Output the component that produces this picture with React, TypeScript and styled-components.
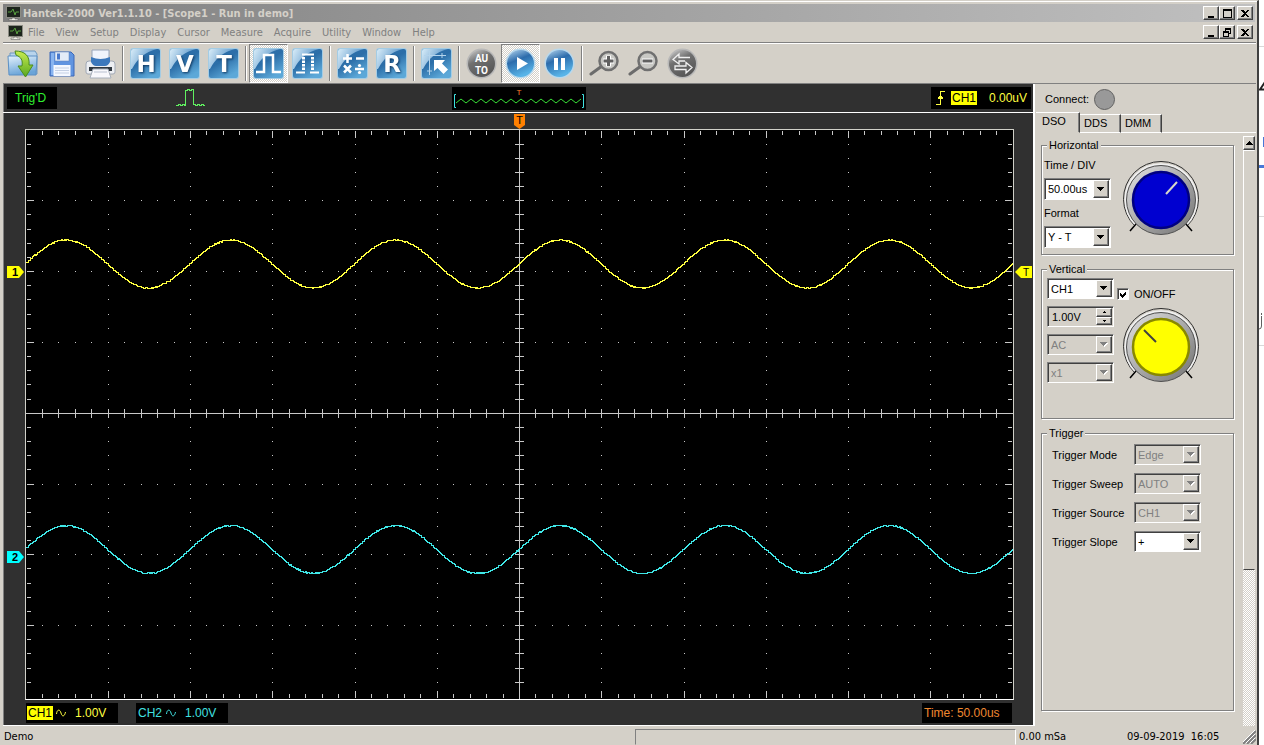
import React, { ReactNode, useState } from "react";
import styled, { createGlobalStyle, css } from "styled-components";

const face = "#d4d0c8";
const shadow = "#808080";
const dark = "#404040";
const tahoma = `"DejaVu Sans Condensed", "DejaVu Sans", sans-serif`;
const arial = `"Liberation Sans", Arial, sans-serif`;

const raised = css`
  border: 1px solid;
  border-color: #ffffff ${dark} ${dark} #ffffff;
  box-shadow: inset -1px -1px 0 ${shadow};
`;

const sunken = css`
  border: 1px solid;
  border-color: ${shadow} #ffffff #ffffff ${shadow};
  box-shadow: inset 1px 1px 0 ${dark};
`;

const dither = css`
  background: repeating-conic-gradient(#ffffff 0 25%, ${face} 0 50%) 0 0 / 2px 2px;
`;

const GlobalStyle = createGlobalStyle`
  *, *::before, *::after { box-sizing: border-box; }
  body { margin: 0; background: #ffffff; font: 11px/12px ${arial}; color: #000000; }
  button, select, input { font: inherit; color: inherit; margin: 0; padding: 0; border-radius: 0; }
  svg { display: block; flex: none; }
`;

/* ---------- window frame ---------- */

const Desktop = styled.div`
  display: flex;
  min-height: 100vh;
`;

const AppWindow = styled.div`
  flex: 1;
  min-width: 0;
  display: flex;
  flex-direction: column;
  background: ${face};
  padding: 2px 1px 0 3px;
  border-top: 1px solid ${face};
  border-right: 2px solid ${dark};
  box-shadow: inset 0 1px 0 #ffffff;
`;

const PageBehind = styled.div`
  width: 5px;
  overflow: hidden;
  display: flex;
  flex-direction: column;
`;

const PageSlice = styled.div<{ $height: number; $rule?: string; $thick?: number }>`
  height: ${(p) => p.$height}px;
  display: flex;
  align-items: flex-end;
  border-bottom: ${(p) => p.$thick ?? 1}px solid ${(p) => p.$rule ?? "transparent"};
`;

const TitleBar = styled.header`
  display: flex;
  align-items: center;
  height: 19px;
  margin-right: 1px;
  padding: 0 2px 0 3px;
  gap: 2px;
  background: linear-gradient(90deg, #808080, #c0c0c0);
  color: ${face};
  border-top: 1px solid ${face};
`;

const Title = styled.h1`
  flex: 1;
  margin: 0;
  padding-top: 1px;
  font: bold 11px/14px ${tahoma};
  white-space: nowrap;
`;

const MenuBar = styled.nav`
  display: flex;
  align-items: center;
  height: 20px;
  margin-right: 1px;
  padding: 0 2px 0 5px;
  gap: 5px;
`;

const MenuList = styled.div`
  flex: 1;
  display: flex;
  gap: 11px;
  padding-top: 1px;
`;

const MenuItem = styled.button`
  border: 0;
  background: none;
  color: ${shadow};
  font: 11px/14px ${tahoma};
`;

const Captions = styled.div`
  display: flex;
`;

const CaptionButton = styled.button<{ $apart?: boolean }>`
  ${raised}
  width: 16px;
  height: 14px;
  display: grid;
  place-items: center;
  background: ${face};
  margin-left: ${(p) => (p.$apart ? 2 : 0)}px;
`;

/* ---------- toolbar ---------- */

const Toolbar = styled.div`
  display: flex;
  height: 42px;
  border-top: 1px solid ${shadow};
  border-bottom: 1px solid ${shadow};
  box-shadow: inset 0 1px 0 #ffffff;
  padding-top: 1px;
`;

const ToolButton = styled.button<{ $pressed?: boolean }>`
  width: 39px;
  height: 39px;
  display: grid;
  place-items: center;
  border: 1px solid transparent;
  background: none;
  ${(p) =>
    p.$pressed &&
    css`
      ${dither}
      border-color: ${shadow} #ffffff #ffffff ${shadow};
    `}
`;

const ToolSeparator = styled.div`
  width: 2px;
  margin: 2px;
  background: ${shadow};
  border-right: 1px solid #ffffff;
`;

/* ---------- scope ---------- */

const Main = styled.main`
  flex: 1;
  display: flex;
`;

const ScopePane = styled.section`
  flex: 1;
  min-width: 0;
  display: flex;
  flex-direction: column;
  border-right: 2px solid #ffffff;
  border-bottom: 1px solid #ffffff;
`;

const TriggerStrip = styled.div`
  display: grid;
  grid-template-columns: 1fr auto 1fr;
  height: 28px;
  padding: 3px 2px 0 3px;
  background: #303030;
  border-left: 1px solid ${shadow};
  margin-bottom: 1px;
  box-shadow: 0 1px 0 #ffffff;
`;

const StripSide = styled.div<{ $end?: boolean }>`
  display: flex;
  align-items: flex-start;
  justify-content: ${(p) => (p.$end ? "flex-end" : "flex-start")};
  gap: 119px;
`;

const Readout = styled.div<{ $color: string; $width: number }>`
  display: flex;
  align-items: center;
  height: 22px;
  width: ${(p) => p.$width}px;
  background: #000000;
  color: ${(p) => p.$color};
  font: 12px/14px ${arial};
  white-space: pre;
`;

const Status = styled.span`
  padding-left: 8px;
`;

const ChannelTag = styled.span<{ $on?: boolean }>`
  padding: 0 1px;
  margin-left: 1px;
  ${(p) =>
    p.$on &&
    css`
      background: #ffff00;
      color: #000000;
    `}
`;

const TriggerLevel = styled.span`
  flex: 1;
  text-align: right;
  padding-right: 4px;
`;

const Coupling = styled.span`
  padding: 0 9px 0 3px;
`;

const ScopeArea = styled.div`
  flex: 1;
  display: flex;
  flex-direction: column;
  background: #303030;
  border-left: 1px solid ${shadow};
`;

const MarkerRow = styled.div`
  height: 16px;
  padding: 1px 19px 0 21px;
  display: flex;
  justify-content: center;
`;

const PlotRow = styled.div`
  flex: 1;
  display: flex;
`;

const Gutter = styled.div<{ $width: number }>`
  position: relative;
  width: ${(p) => p.$width}px;
`;

const GutterPin = styled.div<{ $level: number; $left: number }>`
  position: absolute;
  top: ${(p) => p.$level}%;
  left: ${(p) => p.$left}px;
  transform: translateY(-50%);
`;

const PlotFrame = styled.div`
  flex: 1;
  min-width: 0;
  display: flex;
  background: #000000;
  border: 1px solid #d0d0c8;
  border-bottom-color: #ffffff;
`;

const PlotSvg = styled.svg`
  width: 100%;
  flex: 1;
  min-height: 560px;
`;

const ScopeFooter = styled.div`
  display: flex;
  height: 25px;
  padding: 3px 21px 0 22px;
  gap: 18px;
  ${Readout} {
    height: 20px;
  }
`;

const Spring = styled.div`
  flex: 1;
`;

const TimeText = styled.span`
  padding-left: 2px;
`;

/* ---------- control panel ---------- */

const ControlPanel = styled.aside`
  width: 221px;
  display: flex;
  flex-direction: column;
`;

const ConnectRow = styled.div`
  display: flex;
  align-items: center;
  height: 28px;
  padding: 2px 0 0 10px;
  gap: 5px;
`;

const Lamp = styled.span`
  width: 21px;
  height: 21px;
  border-radius: 50%;
  background: #999999;
  border: 1px solid #606060;
`;

const Tabs = styled.div`
  display: flex;
  align-items: flex-end;
  height: 21px;
  padding-left: 1px;
`;

const Tab = styled.button<{ $active?: boolean }>`
  height: 19px;
  width: 41px;
  padding: 0 0 1px 4px;
  text-align: left;
  background: none;
  border: 0 solid;
  border-width: 1px 1px 1px 0;
  border-color: #ffffff ${dark} #ffffff #ffffff;
  box-shadow: inset -1px 0 0 ${shadow};
  ${(p) =>
    p.$active &&
    css`
      width: 44px;
      height: 21px;
      padding-bottom: 3px;
      padding-left: 6px;
      border-bottom-color: ${face};
    `}
`;

const TabRest = styled.div`
  flex: 1;
  border-bottom: 1px solid #ffffff;
`;

const PanelBody = styled.div`
  flex: 1;
  display: flex;
`;

const Groups = styled.div`
  flex: 1;
  display: flex;
  flex-direction: column;
  gap: 8px;
  padding: 6px 9px 15px 6px;
`;

const Group = styled.fieldset<{ $height?: number }>`
  min-width: 0;
  margin: 0;
  padding: 0;
  border: 1px solid ${shadow};
  box-shadow: 1px 1px 0 #ffffff, inset 1px 1px 0 #ffffff;
  ${(p) => (p.$height ? `height: ${p.$height}px;` : "flex: 1;")}
`;

const Legend = styled.legend`
  margin-left: 5px;
  padding: 0 2px;
  background: ${face};
`;

const GroupRow = styled.div<{ $gap: number }>`
  display: flex;
  gap: ${(p) => p.$gap}px;
`;

const Column = styled.div<{ $top: number; $left?: number }>`
  display: flex;
  flex-direction: column;
  gap: 7px;
  padding: ${(p) => p.$top}px 0 0 ${(p) => p.$left ?? 0}px;
`;

const FieldLabel = styled.label`
  height: 12px;
  white-space: nowrap;
`;

const Combo = styled.span<{ $disabled?: boolean; $height?: number }>`
  ${sunken}
  display: flex;
  width: 67px;
  height: ${(p) => p.$height ?? 21}px;
  padding: 1px;
  background: ${(p) => (p.$disabled ? face : "#ffffff")};
  position: relative;
`;

const ComboSelect = styled.select`
  appearance: none;
  flex: 1;
  min-width: 0;
  padding-left: 2px;
  border: 0;
  background: transparent;
  &:disabled {
    color: ${shadow};
    opacity: 1;
  }
`;

const ComboArrow = styled.span`
  ${raised}
  position: absolute;
  top: 1px;
  right: 1px;
  bottom: 1px;
  width: 16px;
  display: grid;
  place-items: center;
  background: ${face};
  pointer-events: none;
`;

const SpinBox = styled.span`
  ${sunken}
  display: flex;
  width: 67px;
  height: 21px;
  padding: 1px;
`;

const SpinInput = styled.input`
  flex: 1;
  min-width: 0;
  border: 0;
  padding-left: 3px;
  background: transparent;
`;

const SpinButtons = styled.span`
  display: flex;
  flex-direction: column;
  width: 16px;
`;

const SpinButton = styled.button`
  ${raised}
  flex: 1;
  display: grid;
  place-items: center;
  background: ${face};
`;

const CheckRow = styled.label`
  display: flex;
  align-items: center;
  gap: 5px;
  height: 12px;
`;

const CheckBox = styled.input`
  ${sunken}
  appearance: none;
  width: 12px;
  height: 12px;
  background: #ffffff;
`;

const CheckHolder = styled.span`
  position: relative;
  display: flex;
  svg {
    position: absolute;
    inset: 2px;
    pointer-events: none;
  }
`;

const KnobHolder = styled.div`
  padding-left: 4px;
`;

const TriggerGrid = styled.div`
  display: grid;
  grid-template-columns: 82px auto;
  align-items: center;
  justify-content: start;
  row-gap: 8px;
  padding: 5px 0 0 10px;
`;

const ScrollBar = styled.div`
  width: 13px;
  display: flex;
  flex-direction: column;
  padding: 3px 1px 0 0;
`;

const ScrollUp = styled.button`
  ${raised}
  height: 14px;
  display: grid;
  place-items: center;
  background: ${face};
`;

const ScrollThumb = styled.div`
  ${raised}
  flex: 420;
  border-right-color: ${face};
  box-shadow: none;
`;

const ScrollTrack = styled.div`
  ${dither}
  flex: 157;
`;

/* ---------- status bar ---------- */

const StatusBar = styled.footer`
  display: flex;
  align-items: center;
  height: 19px;
  padding: 3px 0 0 1px;
  font: 11px/14px ${tahoma};
  white-space: pre;
`;

const Progress = styled.div`
  width: 381px;
  height: 16px;
  border: 1px solid;
  border-color: ${shadow} #ffffff ${face} ${shadow};
`;

const SampleText = styled.span`
  width: 111px;
  padding-left: 3px;
`;

const ClockText = styled.span`
  width: 116px;
`;

/* ---------- drawings ---------- */

const MonitorIcon = () => (
  <svg width="15" height="15" viewBox="0 0 15 15">
    <rect x="0" y="0" width="15" height="12" fill="#8c8c84" />
    <rect x="1" y="1" width="13" height="10" fill="#1c241c" />
    <path d="M2 6h3l2-3 2 6 1-3h3" stroke="#58a040" fill="none" />
    <path d="M6 12h3v1h3v1.500H3V13h3z" fill="#f0f0e8" stroke="#505050" strokeWidth="0.500" />
  </svg>
);

const captionGlyphs: Record<string, ReactNode> = {
  Minimize: <path d="M1 7h6v2H1z" />,
  Maximize: <path d="M0 0h9v9H0zM1 2v6h7V2z" fillRule="evenodd" />,
  Restore: <path d="M2 0h6v6H6v3H0V3h2zM3 2v1h3v2h1V2zM1 5v3h4V5z" fillRule="evenodd" />,
  Close: <path d="M0 1h2l2 2 2-2h2L5 4.500l3 3.500H6L4 6 2 8H0l3-3.500z" />,
};

const CaptionSet = ({ middle }: { middle: string }) => (
  <Captions>
    {["Minimize", middle, "Close"].map((name) => (
      <CaptionButton key={name} aria-label={name} $apart={name === "Close"}>
        <svg width="9" height="9" viewBox="0 0 9 9" shapeRendering="crispEdges">
          {captionGlyphs[name]}
        </svg>
      </CaptionButton>
    ))}
  </Captions>
);

const HiddenDefs = styled.svg`
  position: absolute;
`;

const IconDefs = () => (
  <HiddenDefs width="0" height="0" aria-hidden="true">
    <defs>
      <linearGradient id="tile" x1="0" y1="0" x2="0.600" y2="1">
        <stop offset="0" stopColor="#2e70ac" />
        <stop offset="0.500" stopColor="#2c6ea8" />
        <stop offset="1" stopColor="#5ca8d8" />
      </linearGradient>
      <linearGradient id="gloss" x1="0" y1="0" x2="1" y2="0.400">
        <stop offset="0" stopColor="#d8ecf8" />
        <stop offset="1" stopColor="#4c8cc4" />
      </linearGradient>
      <linearGradient id="greyDisc" x1="0" y1="0" x2="0.500" y2="1">
        <stop offset="0" stopColor="#d0d0d0" />
        <stop offset="0.450" stopColor="#707070" />
        <stop offset="1" stopColor="#585858" />
      </linearGradient>
      <linearGradient id="blueDisc" x1="0" y1="0" x2="0.400" y2="1">
        <stop offset="0" stopColor="#b8d8f0" />
        <stop offset="0.450" stopColor="#2c6cac" />
        <stop offset="1" stopColor="#58b4e8" />
      </linearGradient>
      <linearGradient id="folder" x1="0" y1="0" x2="0.300" y2="1">
        <stop offset="0" stopColor="#e4f2fc" />
        <stop offset="1" stopColor="#6aa4d8" />
      </linearGradient>
      <linearGradient id="arrowGreen" x1="0" y1="0" x2="0" y2="1">
        <stop offset="0" stopColor="#c8ec50" />
        <stop offset="1" stopColor="#58a820" />
      </linearGradient>
      <linearGradient id="knobRing" x1="0" y1="0" x2="1" y2="1">
        <stop offset="0" stopColor="#e4e4e4" />
        <stop offset="1" stopColor="#707070" />
      </linearGradient>
    </defs>
  </HiddenDefs>
);

const Tile = ({ children }: { children: ReactNode }) => (
  <svg width="31" height="31" viewBox="0 0 31 31">
    <rect width="31" height="31" rx="3" fill="#a4cce4" />
    <rect x="1" y="1" width="29" height="29" rx="2" fill="url(#tile)" />
    <path d="M1 3a2 2 0 0 1 2-2h24Q10 5 2 21H1z" fill="url(#gloss)" />
    {children}
  </svg>
);

const IconText = styled.text`
  font-family: "DejaVu Sans", sans-serif;
  font-weight: bold;
  text-anchor: middle;
  fill: #ffffff;
`;

const TileLetter = styled(IconText)`
  font-size: 23px;
  filter: drop-shadow(1px 1px 1px #103860);
`;

const LetterTile = ({ letter }: { letter: string }) => (
  <Tile>
    <TileLetter x="16" y="23.500">
      {letter}
    </TileLetter>
  </Tile>
);

const AutoText = styled(IconText)`
  font-family: Roboto, ${arial};
  font-size: 10px;
`;

const Disc = ({ fill, rim, children }: { fill: string; rim: string; children: ReactNode }) => (
  <svg width="31" height="31" viewBox="0 0 31 31">
    <circle cx="15.500" cy="15.500" r="15" fill={rim} />
    <circle cx="15.500" cy="15.500" r="13.500" fill={fill} />
    {children}
  </svg>
);

const Magnifier = ({ plus }: { plus?: boolean }) => (
  <svg width="31" height="29" viewBox="0 0 31 29">
    <path d="M2 25 13 17" stroke="#6c6c6c" strokeWidth="3" strokeLinecap="round" />
    <circle cx="19.500" cy="12" r="9" fill="#c8c8c4" stroke="#707070" strokeWidth="2.500" />
    <path d={plus ? "M14 12h11M19.500 6.500v11" : "M14 12h11"} stroke="#ffffff" strokeWidth="5" />
    <path d={plus ? "M14.500 12h10M19.500 7v10" : "M14.500 12h10"} stroke="#606060" strokeWidth="3" />
  </svg>
);

const OpenIcon = () => (
  <svg width="32" height="28" viewBox="0 0 32 28">
    <path d="M3 3h9l2-2h14l2 3v20H3z" fill="#b8d4ec" stroke="#6c98c0" />
    <path d="M1 6h29l-1 19H2z" fill="url(#folder)" stroke="#5c90c4" />
    <path
      d="M8 1c10 0 15 5 14 14h4l-7.500 12L11 16h4c1-6-1-9-6-11z"
      fill="url(#arrowGreen)"
      stroke="#4c8c1c"
    />
  </svg>
);

const SaveIcon = () => (
  <svg width="26" height="28" viewBox="0 0 26 28">
    <path d="M1 2h21l3 3v21H1z" fill="#6094e0" stroke="#3c68b8" />
    <path d="M2 3h3v22H2z" fill="#88b4f0" />
    <rect x="6" y="2" width="14" height="9" fill="#e4ecf8" stroke="#5c80b8" strokeWidth="0.500" />
    <rect x="8" y="3.500" width="3" height="6" fill="#4878cc" />
    <rect x="4.500" y="15" width="17" height="11" fill="#f4f8ff" />
    <path d="M6 18h14M6 20.500h14M6 23h14" stroke="#c4d0e4" />
  </svg>
);

const PrintIcon = () => (
  <svg width="31" height="30" viewBox="0 0 31 30">
    <path
      d="M4 12h23q3 0 3 3v8q0 2-2 2H3q-2 0-2-2v-8q0-3 3-3z"
      fill="#eceef2"
      stroke="#a0a8b4"
    />
    <path d="M4 18h23v4H4z" fill="#303840" />
    <path d="M7 1h17v12H7z" fill="#f0f4fc" stroke="#98a4b8" />
    <path d="M6 8q9.500 4 19 0v5q-2 4-5 4h-9q-3 0-5-4z" fill="#3c78bc" />
    <path d="M8 20h15l3 9H5z" fill="#f8f8fc" stroke="#a8b0bc" />
    <path d="M9 23h13" stroke="#b8c0d0" />
  </svg>
);

type Tool = { name: string; icon: ReactNode; pressed?: boolean };

const toolGroups: Tool[][] = [
  [
    { name: "Open", icon: <OpenIcon /> },
    { name: "Save", icon: <SaveIcon /> },
    { name: "Print", icon: <PrintIcon /> },
  ],
  [
    { name: "Horizontal", icon: <LetterTile letter="H" /> },
    { name: "Vertical", icon: <LetterTile letter="V" /> },
    { name: "Trigger", icon: <LetterTile letter="T" /> },
  ],
  [
    {
      name: "Line",
      pressed: true,
      icon: (
        <Tile>
          <path d="M3 24h8V7h9v17h8" fill="none" stroke="#ffffff" strokeWidth="2.500" />
        </Tile>
      ),
    },
    {
      name: "Dots",
      icon: (
        <Tile>
          <path
            d="M4 24.500h9M18 24.500h9M10 6.500h12"
            fill="none"
            stroke="#ffffff"
            strokeWidth="2"
          />
          <path d="M11.500 9v14M20.500 9v14" stroke="#ffffff" strokeWidth="3" strokeDasharray="2.500 1" />
        </Tile>
      ),
    },
  ],
  [
    {
      name: "Math",
      icon: (
        <Tile>
          <path
            d="M6 10.500h9M10.500 6v9M19 10.500h8M7 17.500l7 7M14 17.500l-7 7M18 21h9"
            stroke="#ffffff"
            strokeWidth="2.500"
          />
          <circle cx="22.500" cy="17.500" r="1.600" fill="#ffffff" />
          <circle cx="22.500" cy="24.500" r="1.600" fill="#ffffff" />
        </Tile>
      ),
    },
    { name: "Reference", icon: <LetterTile letter="R" /> },
  ],
  [
    {
      name: "Cursor",
      icon: (
        <Tile>
          <path d="M8.500 3v24M3 7.500h22M21 5v5M6 23h5" stroke="#b4d4ec" />
          <path d="M13 12h11l-3 3.500 6 6-4.500 4.500-6-6L13 23z" fill="#ffffff" />
        </Tile>
      ),
    },
  ],
  [
    {
      name: "Auto set",
      icon: (
        <Disc fill="url(#greyDisc)" rim="#b8b8b8">
          <AutoText x="15.500" y="14">
            AU
          </AutoText>
          <AutoText x="15.500" y="26">
            TO
          </AutoText>
        </Disc>
      ),
    },
    {
      name: "Run",
      pressed: true,
      icon: (
        <Disc fill="url(#blueDisc)" rim="#b8d8ec">
          <path d="M12 9v13l11-6.500z" fill="#ffffff" />
        </Disc>
      ),
    },
    {
      name: "Pause",
      icon: (
        <Disc fill="url(#blueDisc)" rim="#b8d8ec">
          <path d="M12 10v12M19 10v12" stroke="#ffffff" strokeWidth="4" />
        </Disc>
      ),
    },
  ],
  [
    { name: "Zoom in", icon: <Magnifier plus /> },
    { name: "Zoom out", icon: <Magnifier /> },
    {
      name: "Swap",
      icon: (
        <Disc fill="url(#greyDisc)" rim="#b8b8b8">
          <path
            d="M23 9.500H12V6l-6 5.500 6 4.500v-3h6M8 18h11v-3.500l6 5-6 5.500v-3.500H8z"
            fill="none"
            stroke="#f0f0f0"
            strokeWidth="1.300"
          />
        </Disc>
      ),
    },
  ],
];

const DownArrow = ({ faded }: { faded?: boolean }) => (
  <svg width="8" height="5" viewBox="0 0 8 5" shapeRendering="crispEdges">
    {faded && <path d="M1 1h7v1H7v1H6v1H5v1H4V4H3V3H2V2H1z" fill="#ffffff" />}
    <path d="M0 0h7v1H6v1H5v1H4v1H3V3H2V2H1V1H0z" fill={faded ? shadow : "#000000"} />
  </svg>
);

const WIDTH = 987;
const HEIGHT = 569;
const DIV_X = WIDTH / 12;
const DIV_Y = 70.8;
const CENTER_X = 493;
const CENTER_Y = 283;

const xs = Array.from({ length: 59 }, (_, i) => ({
  at: Math.floor(((i + 1) * DIV_X) / 5),
  major: (i + 1) % 5 === 0,
}));
const ys = Array.from({ length: 39 }, (_, i) => ({
  at: Math.floor(((i + 1) * DIV_Y) / 5),
  major: (i + 1) % 5 === 0,
}));

const box = (x: number, y: number, w: number, h: number) => `M${x} ${y}h${w}v${h}h${-w}z`;

const graticule = [
  ...xs.map(({ at, major }) => {
    const size = major ? 7 : 4;
    return (
      box(at, 1, 1, size) + box(at, HEIGHT - size - 1, 1, size) + box(at, CENTER_Y - 4, 1, 9)
    );
  }),
  ...ys.map(({ at, major }) => {
    const size = major ? 7 : 4;
    return box(1, at, size, 1) + box(WIDTH - size - 1, at, size, 1) + box(CENTER_X - 4, at, 9, 1);
  }),
  ...xs.filter((x) => x.major).flatMap((x) => ys.map((y) => box(x.at, y.at, 1, 1))),
  ...ys.filter((y) => y.major).flatMap((y) => xs.map((x) => box(x.at, y.at, 1, 1))),
].join("");

/* Quantised sine samples with a little deterministic sampling noise. */
const trace = (mean: number, seed: number) => {
  const points: string[] = [];
  let noise = seed;
  for (let x = 0; x < WIDTH; x += 1) {
    noise = (noise * 1664525 + 1013904223) % 4294967296;
    const jitter = (noise / 4294967296 - 0.5) * 1.1;
    const y = Math.round(mean - 23.9 * Math.cos((2 * Math.PI * (x - 39.5)) / 164.6) + jitter);
    points.push(`${x} ${y + 0.5}H${x + 1}`);
  }
  return `M${points.join("L")}`;
};

const Plot = () => (
  <PlotSvg viewBox={`0 0 ${WIDTH} ${HEIGHT}`} preserveAspectRatio="none" aria-label="Waveforms">
    <g shapeRendering="crispEdges">
      <path
        d={`M${CENTER_X + 0.5} 0V${HEIGHT}M0 ${CENTER_Y + 0.5}H${WIDTH}`}
        stroke="#c8c8c8"
        vectorEffect="non-scaling-stroke"
      />
      <path d={graticule} fill="#c8c8c8" />
      <path d={trace(133.5, 7)} fill="none" stroke="#ffff40" vectorEffect="non-scaling-stroke" />
      <path d={trace(419, 91)} fill="none" stroke="#40e8e8" vectorEffect="non-scaling-stroke" />
    </g>
  </PlotSvg>
);

const ChannelPin = ({ label, color }: { label: string; color: string }) => (
  <svg width="18" height="12" viewBox="0 0 18 12">
    <path d="M0 0h12l5 6-5 6H0z" fill={color} />
    <text x="8" y="10" fontSize="11" fontWeight="bold" textAnchor="middle" fontFamily={arial}>
      {label}
    </text>
  </svg>
);

const TriggerPin = () => (
  <svg width="18" height="12" viewBox="0 0 18 12">
    <path d="M17 0H6L0 6l6 6h11z" fill="#ffff00" />
    <text x="11" y="10" fontSize="10" textAnchor="middle" fontFamily={arial}>
      T
    </text>
  </svg>
);

const TimePin = () => (
  <svg width="11" height="15" viewBox="0 0 11 15">
    <path d="M0 0h11v11l-5.500 4L0 11z" fill="#ff8000" />
    <text x="5.500" y="10" fontSize="11" textAnchor="middle" fontFamily={arial}>
      T
    </text>
  </svg>
);

const PulseMark = () => (
  <svg width="30" height="20" viewBox="0 0 30 20" shapeRendering="crispEdges">
    <path
      d="M0 18.500h2v-1h2v1h2v-1h2v1h1V3.500h2v-1h2v1h2v-1h2v15h2v1h2v-1h2v1h2v-1h2v1h2"
      fill="none"
      stroke="#60f060"
    />
  </svg>
);

const miniWave = Array.from({ length: 26 }, (_, i) => `${4 + i * 5} ${i % 2 ? 12 : 16}`).join("L");

const Overview = () => (
  <svg width="134" height="23" viewBox="0 0 134 23">
    <rect width="134" height="23" fill="#000000" />
    <path d={`M${miniWave}`} fill="none" stroke="#38e038" />
    <path d="M4 7.500H2.500v13H4M130 7.500h1.500v13H130" fill="none" stroke="#40e0e0" />
    <text x="67" y="8" fontSize="8" fill="#ff8030" textAnchor="middle" fontFamily={arial}>
      T
    </text>
  </svg>
);

const RisingEdge = () => (
  <svg width="19" height="16" viewBox="0 0 19 16" shapeRendering="crispEdges">
    <path d="M5 14.500h4.500V1.500H14" fill="none" stroke="#ffff40" />
    <path d="M9 5h1v1h1v1h1v2H7V7h1V6h1z" fill="#ffff40" />
  </svg>
);

const AcMark = () => (
  <svg width="10" height="8" viewBox="0 0 10 8">
    <path d="M0.500 5C1 0 4 0 5 4s3.500 4 4.500-1" fill="none" stroke="currentColor" />
  </svg>
);

const Knob = ({ color, rim, pointer, ink }: { color: string; rim: string; pointer: string; ink: string }) => (
  <svg width="80" height="80" viewBox="-40 -40 80 80" role="img" aria-label="Knob">
    <path d="M-26 26A37.500 37.500 0 1 1 26 26" fill="none" stroke="#303030" />
    <path d="M-25 25A35.500 35.500 0 1 1 25 25" fill="none" stroke="#f0f0f0" strokeWidth="2" />
    <circle r="34.500" fill="url(#knobRing)" stroke="#505050" />
    <circle r="28" fill={color} stroke={rim} strokeWidth="2.500" />
    <path d={pointer} stroke={ink} strokeWidth="2" />
    <path d="M-25 24l-6 7M25 24l6 7" stroke="#000000" strokeWidth="1.500" />
  </svg>
);

const Dropdown = ({
  id,
  label,
  options,
  disabled,
  height,
}: {
  id: string;
  label?: string;
  options: string[];
  disabled?: boolean;
  height?: number;
}) => (
  <Combo $disabled={disabled} $height={height}>
    <ComboSelect id={id} aria-label={label} disabled={disabled}>
      {options.map((o) => (
        <option key={o}>{o}</option>
      ))}
    </ComboSelect>
    <ComboArrow>
      <DownArrow faded={disabled} />
    </ComboArrow>
  </Combo>
);

const triggerFields = [
  { id: "mode", label: "Trigger Mode", options: ["Edge"], disabled: true },
  { id: "sweep", label: "Trigger Sweep", options: ["AUTO"], disabled: true },
  { id: "source", label: "Trigger Source", options: ["CH1"], disabled: true },
  { id: "slope", label: "Trigger Slope", options: ["+", "-"], disabled: false },
];

const menus = ["File", "View", "Setup", "Display", "Cursor", "Measure", "Acquire", "Utility", "Window", "Help"];

export default function App() {
  const [channelOn, setChannelOn] = useState(true);
  const [tab, setTab] = useState("DSO");

  return (
    <Desktop>
      <GlobalStyle />
      <IconDefs />
      <AppWindow>
        <TitleBar>
          <MonitorIcon />
          <Title>Hantek-2000 Ver1.1.10 - [Scope1 - Run in demo]</Title>
          <CaptionSet middle="Maximize" />
        </TitleBar>
        <MenuBar>
          <MonitorIcon />
          <MenuList>
            {menus.map((m) => (
              <MenuItem key={m}>{m}</MenuItem>
            ))}
          </MenuList>
          <CaptionSet middle="Restore" />
        </MenuBar>
        <Toolbar role="toolbar">
          {toolGroups.map((group, i) => (
            <React.Fragment key={group[0].name}>
              {i > 0 && <ToolSeparator />}
              {group.map((t) => (
                <ToolButton key={t.name} aria-label={t.name} $pressed={t.pressed}>
                  {t.icon}
                </ToolButton>
              ))}
            </React.Fragment>
          ))}
        </Toolbar>

        <Main>
          <ScopePane>
            <TriggerStrip>
              <StripSide>
                <Readout $color="#30f030" $width={50}>
                  <Status>Trig'D</Status>
                </Readout>
                <PulseMark />
              </StripSide>
              <Overview />
              <StripSide $end>
                <Readout $color="#ffff40" $width={100}>
                  <RisingEdge />
                  <ChannelTag $on>CH1</ChannelTag>
                  <TriggerLevel>0.00uV</TriggerLevel>
                </Readout>
              </StripSide>
            </TriggerStrip>
            <ScopeArea>
              <MarkerRow>
                <TimePin />
              </MarkerRow>
              <PlotRow>
                <Gutter $width={21}>
                  <GutterPin $level={25} $left={3}>
                    <ChannelPin label="1" color="#ffff00" />
                  </GutterPin>
                  <GutterPin $level={75} $left={3}>
                    <ChannelPin label="2" color="#00ffff" />
                  </GutterPin>
                </Gutter>
                <PlotFrame>
                  <Plot />
                </PlotFrame>
                <Gutter $width={19}>
                  <GutterPin $level={25} $left={1}>
                    <TriggerPin />
                  </GutterPin>
                </Gutter>
              </PlotRow>
              <ScopeFooter>
                <Readout $color="#ffff40" $width={92}>
                  <ChannelTag $on>CH1</ChannelTag>
                  <Coupling>
                    <AcMark />
                  </Coupling>
                  1.00V
                </Readout>
                <Readout $color="#40e0e0" $width={92}>
                  <ChannelTag>CH2</ChannelTag>
                  <Coupling>
                    <AcMark />
                  </Coupling>
                  1.00V
                </Readout>
                <Spring />
                <Readout $color="#f08830" $width={90}>
                  <TimeText>Time: 50.00us</TimeText>
                </Readout>
              </ScopeFooter>
            </ScopeArea>
          </ScopePane>

          <ControlPanel>
            <ConnectRow>
              Connect:
              <Lamp />
            </ConnectRow>
            <Tabs role="tablist">
              {["DSO", "DDS", "DMM"].map((name) => (
                <Tab
                  key={name}
                  role="tab"
                  aria-selected={tab === name}
                  $active={tab === name}
                  onClick={() => setTab(name)}
                >
                  {name}
                </Tab>
              ))}
              <TabRest />
            </Tabs>
            <PanelBody>
              <Groups>
                <Group $height={116}>
                  <Legend>Horizontal</Legend>
                  <GroupRow $gap={10}>
                    <Column $top={8} $left={2}>
                      <FieldLabel htmlFor="timeDiv">Time / DIV</FieldLabel>
                      <Dropdown id="timeDiv" options={["50.00us"]} height={22} />
                      <FieldLabel htmlFor="format">Format</FieldLabel>
                      <Dropdown id="format" options={["Y - T", "X - Y"]} height={22} />
                    </Column>
                    <Column $top={9}>
                      <Knob color="#0000d0" rim="#000080" pointer="M5-6 16-18" ink="#d8d8c8" />
                    </Column>
                  </GroupRow>
                </Group>
                <Group $height={156}>
                  <Legend>Vertical</Legend>
                  <GroupRow $gap={3}>
                    <Column $top={3} $left={5}>
                      <Dropdown id="channel" label="Channel" options={["CH1", "CH2"]} />
                      <SpinBox>
                        <SpinInput aria-label="Volts per division" defaultValue="1.00V" />
                        <SpinButtons>
                          <SpinButton aria-label="Increase">
                            <svg width="3" height="2" viewBox="0 0 3 2" shapeRendering="crispEdges">
                              <path d="M1 0h1v1h1v1H0V1h1z" />
                            </svg>
                          </SpinButton>
                          <SpinButton aria-label="Decrease">
                            <svg width="3" height="2" viewBox="0 0 3 2" shapeRendering="crispEdges">
                              <path d="M0 0h3v1H2v1H1V1H0z" />
                            </svg>
                          </SpinButton>
                        </SpinButtons>
                      </SpinBox>
                      <Dropdown id="coupling" label="Coupling" options={["AC"]} disabled />
                      <Dropdown id="probe" label="Probe" options={["x1"]} disabled />
                    </Column>
                    <Column $top={13}>
                      <CheckRow>
                        <CheckHolder>
                          <CheckBox
                            type="checkbox"
                            checked={channelOn}
                            onChange={(e) => setChannelOn(e.target.checked)}
                          />
                          {channelOn && (
                            <svg width="8" height="8" viewBox="0 0 8 8" shapeRendering="crispEdges">
                              <path d="M1 3l2 2 4-4v3L3 8 1 6z" />
                            </svg>
                          )}
                        </CheckHolder>
                        ON/OFF
                      </CheckRow>
                      <KnobHolder>
                        <Knob color="#ffff00" rim="#888800" pointer="M-17-17-5-5" ink="#404040" />
                      </KnobHolder>
                    </Column>
                  </GroupRow>
                </Group>
                <Group>
                  <Legend>Trigger</Legend>
                  <TriggerGrid>
                    {triggerFields.map((f) => (
                      <React.Fragment key={f.id}>
                        <FieldLabel htmlFor={f.id}>{f.label}</FieldLabel>
                        <Dropdown id={f.id} options={f.options} disabled={f.disabled} />
                      </React.Fragment>
                    ))}
                  </TriggerGrid>
                </Group>
              </Groups>
              <ScrollBar>
                <ScrollUp aria-label="Scroll up">
                  <svg width="7" height="4" viewBox="0 0 7 4" shapeRendering="crispEdges">
                    <path d="M3 0h1v1h1v1h1v1h1v1H0V3h1V2h1V1h1z" />
                  </svg>
                </ScrollUp>
                <ScrollThumb />
                <ScrollTrack />
              </ScrollBar>
            </PanelBody>
          </ControlPanel>
        </Main>

        <StatusBar>
          <span>Demo</span>
          <Spring />
          <Progress />
          <SampleText>0.00 mSa</SampleText>
          <ClockText>09-09-2019  16:05</ClockText>
          <svg width="13" height="14" viewBox="0 0 13 14">
            <path d="M0 14 13 1M4 14l9-9M8 14l5-5" stroke="#808080" strokeWidth="2" />
            <path d="M-1 13 12 0M3 13l9-9M7 13l5-5" stroke="#ffffff" />
          </svg>
        </StatusBar>
      </AppWindow>
      <PageBehind aria-hidden="true">
        <PageSlice $height={47} $rule="#d8d8d8" />
        <PageSlice $height={45}>
          <svg width="6" height="10" viewBox="0 0 6 10">
            <path d="M6 1 1 8.500h5" fill="none" stroke="#202020" strokeWidth="2" />
          </svg>
        </PageSlice>
        <PageSlice $height={76} $rule="#4878d8" $thick={3}>
          <svg width="6" height="28" viewBox="0 0 6 28">
            <path d="M4.500 0v10" stroke="#4878d8" />
          </svg>
        </PageSlice>
        <PageSlice $height={49} $rule="#d8d8d8" />
        <PageSlice $height={129} $rule="#d8d8d8">
          <svg width="6" height="34" viewBox="0 0 6 34">
            <path d="M2.500 2v2M2.500 5v10q0 3-2.500 3" fill="none" stroke="#606060" />
          </svg>
        </PageSlice>
      </PageBehind>
    </Desktop>
  );
}
